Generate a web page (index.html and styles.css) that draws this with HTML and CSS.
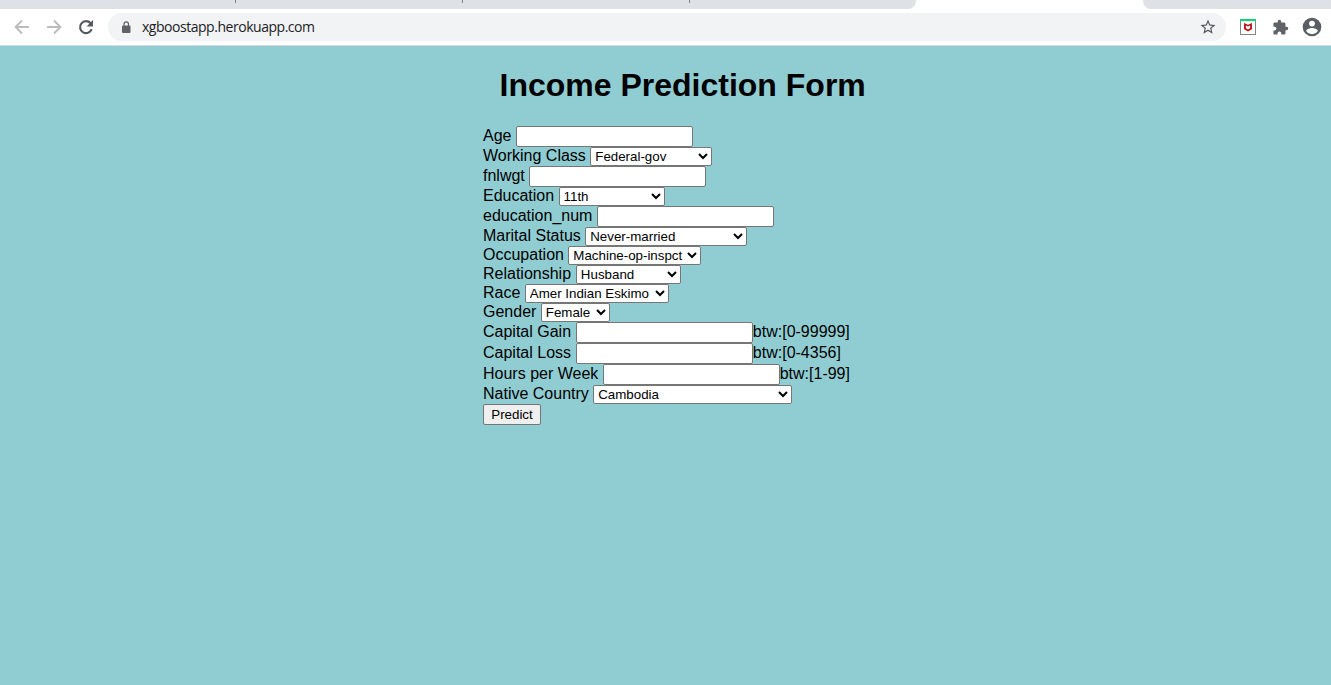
FILE: index.html
```html
<!DOCTYPE html>
<html lang="en">
<head>
<meta charset="utf-8">
<title>Income Prediction Form</title>
<link rel="stylesheet" href="styles.css">
</head>
<body>
<header class="browser">
  <div class="tabs">
    <div class="tabs-left"><i class="sep"></i><i class="sep"></i><i class="sep"></i></div>
    <div class="tab-active"></div>
    <div class="tabs-right"></div>
  </div>
  <div class="toolbar">
    <svg class="nav back" width="16" height="16" viewBox="0 0 16 16" fill="none" stroke="#babcbe" stroke-width="1.9"><path d="M15 8H2M8 1.500L1.600 8L8 14.500"/></svg>
    <svg class="nav" width="16" height="16" viewBox="0 0 16 16" fill="none" stroke="#babcbe" stroke-width="1.9"><path d="M1 8h13M8 1.500L14.400 8L8 14.500"/></svg>
    <svg class="nav" width="16" height="16" viewBox="0 0 16 16"><path d="M13.700 10.200A6 6 0 1 1 12.600 4.200" fill="none" stroke="#55595d" stroke-width="2.100"/><path d="M15 1v6.400H8.600z" fill="#55595d"/></svg>
    <div class="omnibox">
      <svg width="10" height="13" viewBox="0 0 10 13"><rect x="1" y="4.500" width="8.500" height="7.500" rx="1" fill="#5f6368"/><path d="M3 5V3.200a2.250 2.250 0 0 1 4.500 0V5" fill="none" stroke="#5f6368" stroke-width="1.200"/></svg>
      <span class="url">xgboostapp.herokuapp.com</span>
      <svg class="star" width="18" height="18" viewBox="0 0 24 24"><path fill="#55595d" d="M22 9.240l-7.190-.62L12 2 9.190 8.630 2 9.240l5.460 4.730L5.820 21 12 17.270 18.180 21l-1.630-7.030L22 9.240zM12 15.400l-3.760 2.270 1-4.280-3.320-2.880 4.380-.38L12 6.100l1.710 4.040 4.380.38-3.320 2.880 1 4.280L12 15.400z"/></svg>
    </div>
    <svg class="shield" width="16" height="16" viewBox="0 0 16 16"><rect x=".5" y=".5" width="15" height="15" fill="#fff" stroke="#858585"/><path fill="#00d775" d="M0 0h16v2H0z"/><path d="M4 4l4 1.800L12 4v6.200L8 12.500l-4-2.300z" fill="#c01818"/><path d="M5.900 6.400L8 7.400l2.100-1v2.900L8 10.400 5.900 9.300z" fill="#fff"/></svg>
    <svg class="puzzle" width="17" height="17" viewBox="0 0 24 24"><path fill="#5f6368" d="M20.500 11H19V7c0-1.100-.9-2-2-2h-4V3.500a2.500 2.500 0 0 0-5 0V5H4c-1.100 0-2 .9-2 2v3.800h1.500a2.700 2.700 0 0 1 0 5.400H2V20c0 1.100.9 2 2 2h3.800v-1.500a2.700 2.700 0 0 1 5.400 0V22H17c1.100 0 2-.9 2-2v-4h1.500a2.500 2.500 0 0 0 0-5z"/></svg>
    <svg class="user" width="20" height="20" viewBox="0 0 20 20"><circle cx="10" cy="10" r="9.300" fill="#5a5e62"/><circle cx="10" cy="6.600" r="2.900" fill="#fff"/><path fill="#fff" d="M4.200 14.100c0-2 3.800-3 5.800-3s5.800 1 5.800 3a7 7 0 0 1-11.600 0z"/></svg>
  </div>
</header>
<main class="page">
  <h1 class="title">Income Prediction Form</h1>
  <form class="form">
    <div class="row tall"><label>Age</label><input type="text"></div>
    <div class="row"><label>Working Class</label><select class="w-class"><option>Federal-gov</option></select></div>
    <div class="row tall"><label>fnlwgt</label><input type="text"></div>
    <div class="row"><label>Education</label><select class="w-education"><option>11th</option></select></div>
    <div class="row tall"><label>education_num</label><input type="text"></div>
    <div class="row"><label>Marital Status</label><select class="w-marital"><option>Never-married</option></select></div>
    <div class="row"><label>Occupation</label><select class="w-occupation"><option>Machine-op-inspct</option></select></div>
    <div class="row wide-gap"><label>Relationship</label><select class="w-relationship"><option>Husband</option></select></div>
    <div class="row"><label>Race</label><select class="w-race"><option>Amer Indian Eskimo</option></select></div>
    <div class="row"><label>Gender</label><select class="w-gender"><option>Female</option></select></div>
    <div class="row tall wide-gap"><label>Capital Gain</label><input type="text"><span>btw:[0-99999]</span></div>
    <div class="row tall wide-gap"><label>Capital Loss</label><input type="text"><span>btw:[0-4356]</span></div>
    <div class="row tall"><label>Hours per Week</label><input type="text"><span>btw:[1-99]</span></div>
    <div class="row"><label>Native Country</label><select class="w-country"><option>Cambodia</option></select></div>
    <button class="predict" type="button">Predict</button>
  </form>
</main>
</body>
</html>
```
FILE: styles.css
```css
* { box-sizing: border-box; }
body {
  margin: 0;
  height: 685px;
  overflow: hidden;
  background: #90cdd2;
  color: #000;
  font: 16px/18px "Liberation Sans", Arial, sans-serif;
}
.browser { height: 46px; background: #fff; border-bottom: 1px solid #d5d9dc; }
.tabs { display: flex; height: 9px; background: #fff; }
.tabs-left { width: 916px; background: #dee1e6; border-radius: 0 0 8px 0; display: flex; padding-left: 235px; gap: 226px; }
.sep { width: 1px; height: 3px; background: #808387; }
.tab-active { width: 227px; }
.tabs-right { flex: 1; background: #dee1e6; border-radius: 0 0 0 8px; }
.toolbar { display: flex; align-items: center; height: 36px; padding: 0 9px 0 14px; }
.nav { margin-right: 16px; }
.omnibox {
  display: flex;
  align-items: center;
  width: 1118px;
  height: 28px;
  margin-left: -2px;
  padding: 0 9px 0 13px;
  border-radius: 14px;
  background: #f1f3f4;
}
.url { margin-left: 11px; font: 14px/20px "Open Sans", "Noto Sans", sans-serif; letter-spacing: -0.47px; color: #202124; }
.star { margin-left: auto; }
.shield { margin-left: 14px; }
.puzzle { margin-left: 16px; }
.user { margin-left: 13px; }
.title { margin: 21px 0 23px 499.500px; font-size: 32px; line-height: 36px; font-weight: bold; }
.form { padding-left: 483px; }
.row { display: flex; height: 19px; line-height: 18px; white-space: nowrap; }
.row.tall { height: 21px; line-height: 20px; }
.row label { margin-right: 4.400px; }
.row.wide-gap label { margin-right: 4.800px; }
input { width: 177px; height: 21px; margin: 0; border: 1px solid #767676; border-radius: 2px; background: #fff; }
select {
  height: 19px;
  margin: 0;
  padding: 0 1px 0 0;
  border: 1px solid #767676;
  border-radius: 2px;
  background-color: #fff;
  color: #000;
  font: 13.333px "Liberation Sans", Arial, sans-serif;
}
.w-class { width: 122px; }
.w-education { width: 106px; }
.w-marital { width: 162px; }
.w-occupation { width: 133px; }
.w-relationship { width: 105px; }
.w-race { width: 144px; }
.w-gender { width: 69px; }
.w-country { width: 199px; }
.predict {
  display: block;
  width: 58px;
  height: 21px;
  padding: 0;
  border: 1px solid #767676;
  border-radius: 2px;
  background: #efefef;
  color: #000;
  font: 13.333px "Liberation Sans", Arial, sans-serif;
}
```
